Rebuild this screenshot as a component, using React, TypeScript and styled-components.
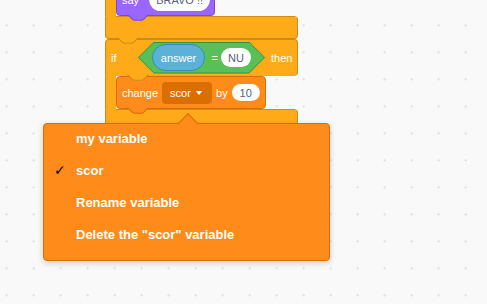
import React from "react";
import styled, { createGlobalStyle } from "styled-components";

const Global = createGlobalStyle`
  html, body { margin: 0; padding: 0; }
  body { font-family: "Liberation Sans", Arial, sans-serif; }
  * { box-sizing: border-box; }
`;

type Tone = { fill: string; stroke: string };
const control: Tone = { fill: "#FFAB19", stroke: "#CF8B17" };
const looks: Tone = { fill: "#9966FF", stroke: "#774DCB" };
const vars: Tone = { fill: "#FF8C1A", stroke: "#DB6E00" };

const Workspace = styled.div`
  position: relative;
  width: 487px;
  height: 304px;
  overflow: hidden;
  background-color: #f9f9f9;
  background-image: radial-gradient(circle, #d9d9d9 0.8px, transparent 1.3px);
  background-size: 27px 27px;
  background-position: -6.8px 11.8px;
`;

const Script = styled.div`
  position: absolute;
  left: 105px;
  top: -17px;
  width: 193px;
  display: flex;
  flex-direction: column;
`;

const CBlock = styled.div`
  display: flex;
  flex-direction: column;
  width: 193px;
`;

const CHeader = styled.div<{ $tone: Tone }>`
  position: relative;
  height: 37px;
  display: flex;
  align-items: center;
  padding-left: 5px;
  background: ${(p) => p.$tone.fill};
  border: 1px solid ${(p) => p.$tone.stroke};
  border-bottom-color: ${(p) => p.$tone.fill};
  border-radius: 4px 4px 4px 0;
  color: #fff;
  font-size: 11px;
`;

const CMouth = styled.div`
  display: flex;
  align-items: stretch;
`;

const CArm = styled.div<{ $tone: Tone }>`
  width: 11px;
  flex: none;
  background: ${(p) => p.$tone.fill};
  border-left: 1px solid ${(p) => p.$tone.stroke};
`;

const CFoot = styled.div<{ $tone: Tone; $h: number }>`
  position: relative;
  height: ${(p) => p.$h}px;
  background: ${(p) => p.$tone.fill};
  border: 1px solid ${(p) => p.$tone.stroke};
  border-top-color: ${(p) => p.$tone.fill};
  border-radius: 0 4px 4px 4px;
  &::before {
    content: "";
    position: absolute;
    left: 10px;
    right: 2px;
    top: -1px;
    height: 1px;
    background: ${(p) => p.$tone.stroke};
  }
`;

const StackBlock = styled.div<{ $tone: Tone; $w: number; $gap: number }>`
  position: relative;
  width: ${(p) => p.$w}px;
  height: 33px;
  display: flex;
  align-items: center;
  gap: ${(p) => p.$gap}px;
  padding: 0 5px;
  background: ${(p) => p.$tone.fill};
  border: 1px solid ${(p) => p.$tone.stroke};
  border-radius: 4px;
  color: #fff;
  font-size: 11px;
  white-space: nowrap;
`;

const TabSvg = styled.svg<{ $left: number }>`
  position: absolute;
  left: ${(p) => p.$left}px;
  top: calc(100% - 0.5px);
  width: 22px;
  height: 6.5px;
  z-index: 2;
  overflow: visible;
`;

const Tab = ({ tone, left }: { tone: Tone; left: number }) => (
  <TabSvg $left={left} viewBox="0 0 36 10" preserveAspectRatio="none">
    <path
      d="M0 0 C2 0 3 1 4 2 L8 6 C9 7 10 8 12 8 H24 C26 8 27 7 28 6 L32 2 C33 1 34 0 36 0 Z"
      fill={tone.fill}
    />
    <path
      d="M0 0 C2 0 3 1 4 2 L8 6 C9 7 10 8 12 8 H24 C26 8 27 7 28 6 L32 2 C33 1 34 0 36 0"
      fill="none"
      stroke={tone.stroke}
      strokeWidth={1.6}
    />
  </TabSvg>
);

const Label = styled.span<{ $w?: number }>`
  display: inline-block;
  flex: none;
  ${(p) => (p.$w ? `width: ${p.$w}px;` : "")}
`;

const TextPill = styled.span<{ $w: number; $h: number }>`
  flex: none;
  width: ${(p) => p.$w}px;
  height: ${(p) => p.$h}px;
  border-radius: ${(p) => p.$h / 2}px;
  background: #fff;
  color: #575e75;
  display: flex;
  align-items: center;
  justify-content: center;
  font-size: 11px;
`;

const ReporterPill = styled.span`
  flex: none;
  width: 53px;
  height: 27px;
  border-radius: 14px;
  background: #5cb1d6;
  border: 1px solid #2e8eb8;
  color: #fff;
  display: flex;
  align-items: center;
  justify-content: center;
  font-size: 11px;
`;

const hexClip = `polygon(16px 0, calc(100% - 16px) 0, 100% 50%, calc(100% - 16px) 100%, 16px 100%, 0 50%)`;

const HexOutline = styled.div`
  flex: none;
  width: 127px;
  height: 32px;
  padding: 1px;
  margin-right: 6px;
  background: #389438;
  clip-path: ${hexClip};
`;

const HexFill = styled.div`
  height: 100%;
  display: flex;
  align-items: center;
  padding-left: 13px;
  background: #59c059;
  clip-path: polygon(15px 0, calc(100% - 15px) 0, 100% 50%, calc(100% - 15px) 100%, 15px 100%, 0 50%);
  color: #fff;
  font-size: 11px;
`;

const Equals = styled.span`
  margin: 0 3px 0 6.5px;
`;

const DropField = styled.span`
  flex: none;
  width: 50px;
  height: 22px;
  border-radius: 4px;
  background: #db6e00;
  display: flex;
  align-items: center;
  padding-left: 8px;
  gap: 5px;
  color: #fff;
`;

const Menu = styled.div`
  position: absolute;
  left: 43px;
  top: 123px;
  width: 287px;
  height: 138px;
  background: #ff8c1a;
  border: 1px solid #db6e00;
  border-radius: 4px;
  box-shadow: 0 2px 6px rgba(0, 0, 0, 0.18);
  z-index: 10;
`;

const MenuList = styled.div`
  display: flex;
  flex-direction: column;
  margin-top: -2px;
`;

const MenuArrow = styled.div`
  position: absolute;
  left: 137px;
  top: -8px;
  width: 14px;
  height: 14px;
  background: #ff8c1a;
  border-top: 1px solid #db6e00;
  border-left: 1px solid #db6e00;
  transform: rotate(45deg);
`;

const MenuItem = styled.div`
  height: 32px;
  display: flex;
  align-items: center;
  color: #fff;
  font-weight: bold;
  font-size: 13px;
  white-space: nowrap;
`;

const CheckSlot = styled.span`
  width: 32px;
  flex: none;
  padding-left: 10px;
  color: #000;
  font-weight: normal;
  font-size: 14px;
  font-family: "DejaVu Sans", sans-serif;
`;

const items = [
  { label: "my variable", checked: false },
  { label: "scor", checked: true },
  { label: "Rename variable", checked: false },
  { label: 'Delete the "scor" variable', checked: false },
];

export default function App() {
  return (
    <>
      <Global />
      <Workspace>
        <Script>
          <CBlock>
            <CMouth>
              <CArm $tone={control} />
              <StackBlock $tone={looks} $w={99} $gap={10}>
                <Label>say</Label>
                <TextPill $w={61} $h={23}>BRAVO !!</TextPill>
                <Tab tone={looks} left={10} />
              </StackBlock>
            </CMouth>
            <CFoot $tone={control} $h={23}>
              <Tab tone={control} left={11} />
            </CFoot>
          </CBlock>
          <CBlock>
            <CHeader $tone={control}>
              <Label $w={27}>if</Label>
              <HexOutline>
                <HexFill>
                  <ReporterPill>answer</ReporterPill>
                  <Equals>=</Equals>
                  <TextPill $w={30} $h={19}>NU</TextPill>
                </HexFill>
              </HexOutline>
              <Label>then</Label>
              <Tab tone={control} left={21} />
            </CHeader>
            <CMouth>
              <CArm $tone={control} />
              <StackBlock $tone={vars} $w={150} $gap={4}>
                <Label>change</Label>
                <DropField>
                  scor
                  <svg width="6" height="4" viewBox="0 0 6 4">
                    <path d="M0.5 0.5 H5.5 L3 3.5 Z" fill="#fff" stroke="#fff" strokeWidth="0.8" strokeLinejoin="round" />
                  </svg>
                </DropField>
                <Label>by</Label>
                <TextPill $w={28} $h={17}>10</TextPill>
                <Tab tone={vars} left={10} />
              </StackBlock>
            </CMouth>
            <CFoot $tone={control} $h={26} />
          </CBlock>
        </Script>
        <Menu>
          <MenuArrow />
          <MenuList>
            {items.map((it) => (
              <MenuItem key={it.label}>
                <CheckSlot>{it.checked ? "✓" : ""}</CheckSlot>
                {it.label}
              </MenuItem>
            ))}
          </MenuList>
        </Menu>
      </Workspace>
    </>
  );
}
